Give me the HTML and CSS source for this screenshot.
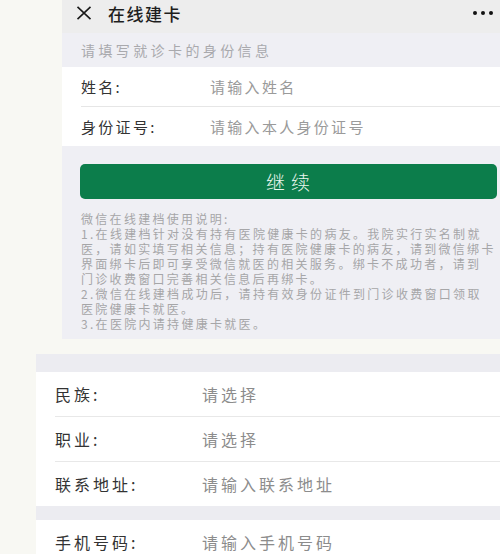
FILE: index.html
```html
<!DOCTYPE html>
<html lang="zh-CN">
<head>
    <meta charset="utf-8">
    <meta name="viewport" content="width=device-width, initial-scale=1.0">
    <title>在线建卡</title>
    <link rel="stylesheet" href="styles.css">
</head>
<body>
    <div class="shot shot-top">
        <div class="nav">
            <svg class="close" width="16" height="14" viewBox="0 0 16 14">
                <path d="M1.5 0.8 L14.5 13.2 M14.5 0.8 L1.5 13.2" stroke="#1a1a1a" stroke-width="1.6" fill="none"/>
            </svg>
            <span class="nav-title">在线建卡</span>
            <span class="dots"><i></i><i></i><i></i></span>
        </div>
        <div class="tip">请填写就诊卡的身份信息</div>
        <div class="form">
            <div class="row">
                <span class="label">姓名:</span>
                <span class="value">请输入姓名</span>
            </div>
            <div class="row">
                <span class="label">身份证号:</span>
                <span class="value">请输入本人身份证号</span>
            </div>
        </div>
        <div class="notice">
            <div class="btn">继 续</div>
            <div class="notice-text">
                <p>微信在线建档使用说明:</p>
                <p>1.在线建档针对没有持有医院健康卡的病友。我院实行实名制就</p>
                <p>医，请如实填写相关信息；持有医院健康卡的病友，请到微信绑卡</p>
                <p>界面绑卡后即可享受微信就医的相关服务。绑卡不成功者，请到</p>
                <p>门诊收费窗口完善相关信息后再绑卡。</p>
                <p>2.微信在线建档成功后，请持有效身份证件到门诊收费窗口领取</p>
                <p>医院健康卡就医。</p>
                <p>3.在医院内请持健康卡就医。</p>
            </div>
        </div>
    </div>

    <div class="shot shot-bottom">
        <div class="band"></div>
        <div class="list">
            <div class="item">
                <span class="label">民族:</span>
                <span class="value">请选择</span>
            </div>
            <div class="item">
                <span class="label">职业:</span>
                <span class="value">请选择</span>
            </div>
            <div class="item">
                <span class="label">联系地址:</span>
                <span class="value">请输入联系地址</span>
            </div>
        </div>
        <div class="band small"></div>
        <div class="list">
            <div class="item">
                <span class="label">手机号码:</span>
                <span class="value">请输入手机号码</span>
            </div>
        </div>
    </div>
</body>
</html>
```

FILE: styles.css
```css
html, body {
    margin: 0;
    padding: 0;
}

body {
    background-color: #f8f8f3;
    font-family: "Noto Sans CJK SC", "Noto Sans", sans-serif;
    overflow: hidden;
    height: 554px;
}

.shot {
    background-color: #ffffff;
}

.shot-top {
    margin-left: 62px;
}

.shot-bottom {
    margin-left: 36px;
    margin-top: 15px;
}

/* nav bar */
.nav {
    height: 33px;
    box-sizing: border-box;
    padding: 0 7px 7px 14px;
    background-color: #ededed;
    display: flex;
    align-items: center;
}

.close {
    flex: none;
}

.nav-title {
    margin-left: 16px;
    font-size: 17px;
    font-weight: 500;
    color: #1e1e1e;
    letter-spacing: 1.5px;
}

.dots {
    margin-left: auto;
    display: flex;
    gap: 4px;
}

.dots i {
    display: block;
    width: 4px;
    height: 4px;
    border-radius: 50%;
    background-color: #111;
}

.tip {
    height: 34px;
    box-sizing: border-box;
    padding-left: 19px;
    background-color: #efeff4;
    color: #a9a9ad;
    font-size: 14px;
    letter-spacing: 3.4px;
    display: flex;
    align-items: center;
}

.form {
    background-color: #fff;
}

.row {
    height: 39px;
    margin-left: 19px;
    display: flex;
    align-items: center;
    font-size: 15px;
    letter-spacing: 2.3px;
}

.row + .row {
    border-top: 1px solid #e6e6e6;
}

.row .label {
    width: 129px;
    color: #333;
}

.row .value {
    color: #9a9a9a;
}

/* button and notes */
.notice {
    background-color: #efeff4;
    padding: 18px 3px 8px 18px;
}

.btn {
    height: 35px;
    border-radius: 5px;
    background-color: #0c7d4b;
    color: #eaf7ee;
    font-size: 19px;
    font-weight: 300;
    display: flex;
    align-items: center;
    justify-content: center;
    letter-spacing: 1px;
}

.notice-text {
    margin-top: 12px;
    padding-left: 1px;
    color: #a6a6a8;
    font-size: 12px;
    line-height: 15px;
    letter-spacing: 2.3px;
}

.notice-text p {
    margin: 0;
    white-space: nowrap;
}

/* lower screenshot */
.band {
    height: 18px;
    background-color: #ececf1;
}

.band.small {
    height: 14px;
}

.list {
    background-color: #fff;
}

.item {
    height: 44px;
    margin-left: 19px;
    display: flex;
    align-items: center;
    font-size: 16px;
    letter-spacing: 3px;
}

.item + .item {
    border-top: 1px solid #e8e8e8;
}

.item .label {
    width: 147px;
    color: #333;
}

.item .value {
    color: #8c8c8c;
}
```
